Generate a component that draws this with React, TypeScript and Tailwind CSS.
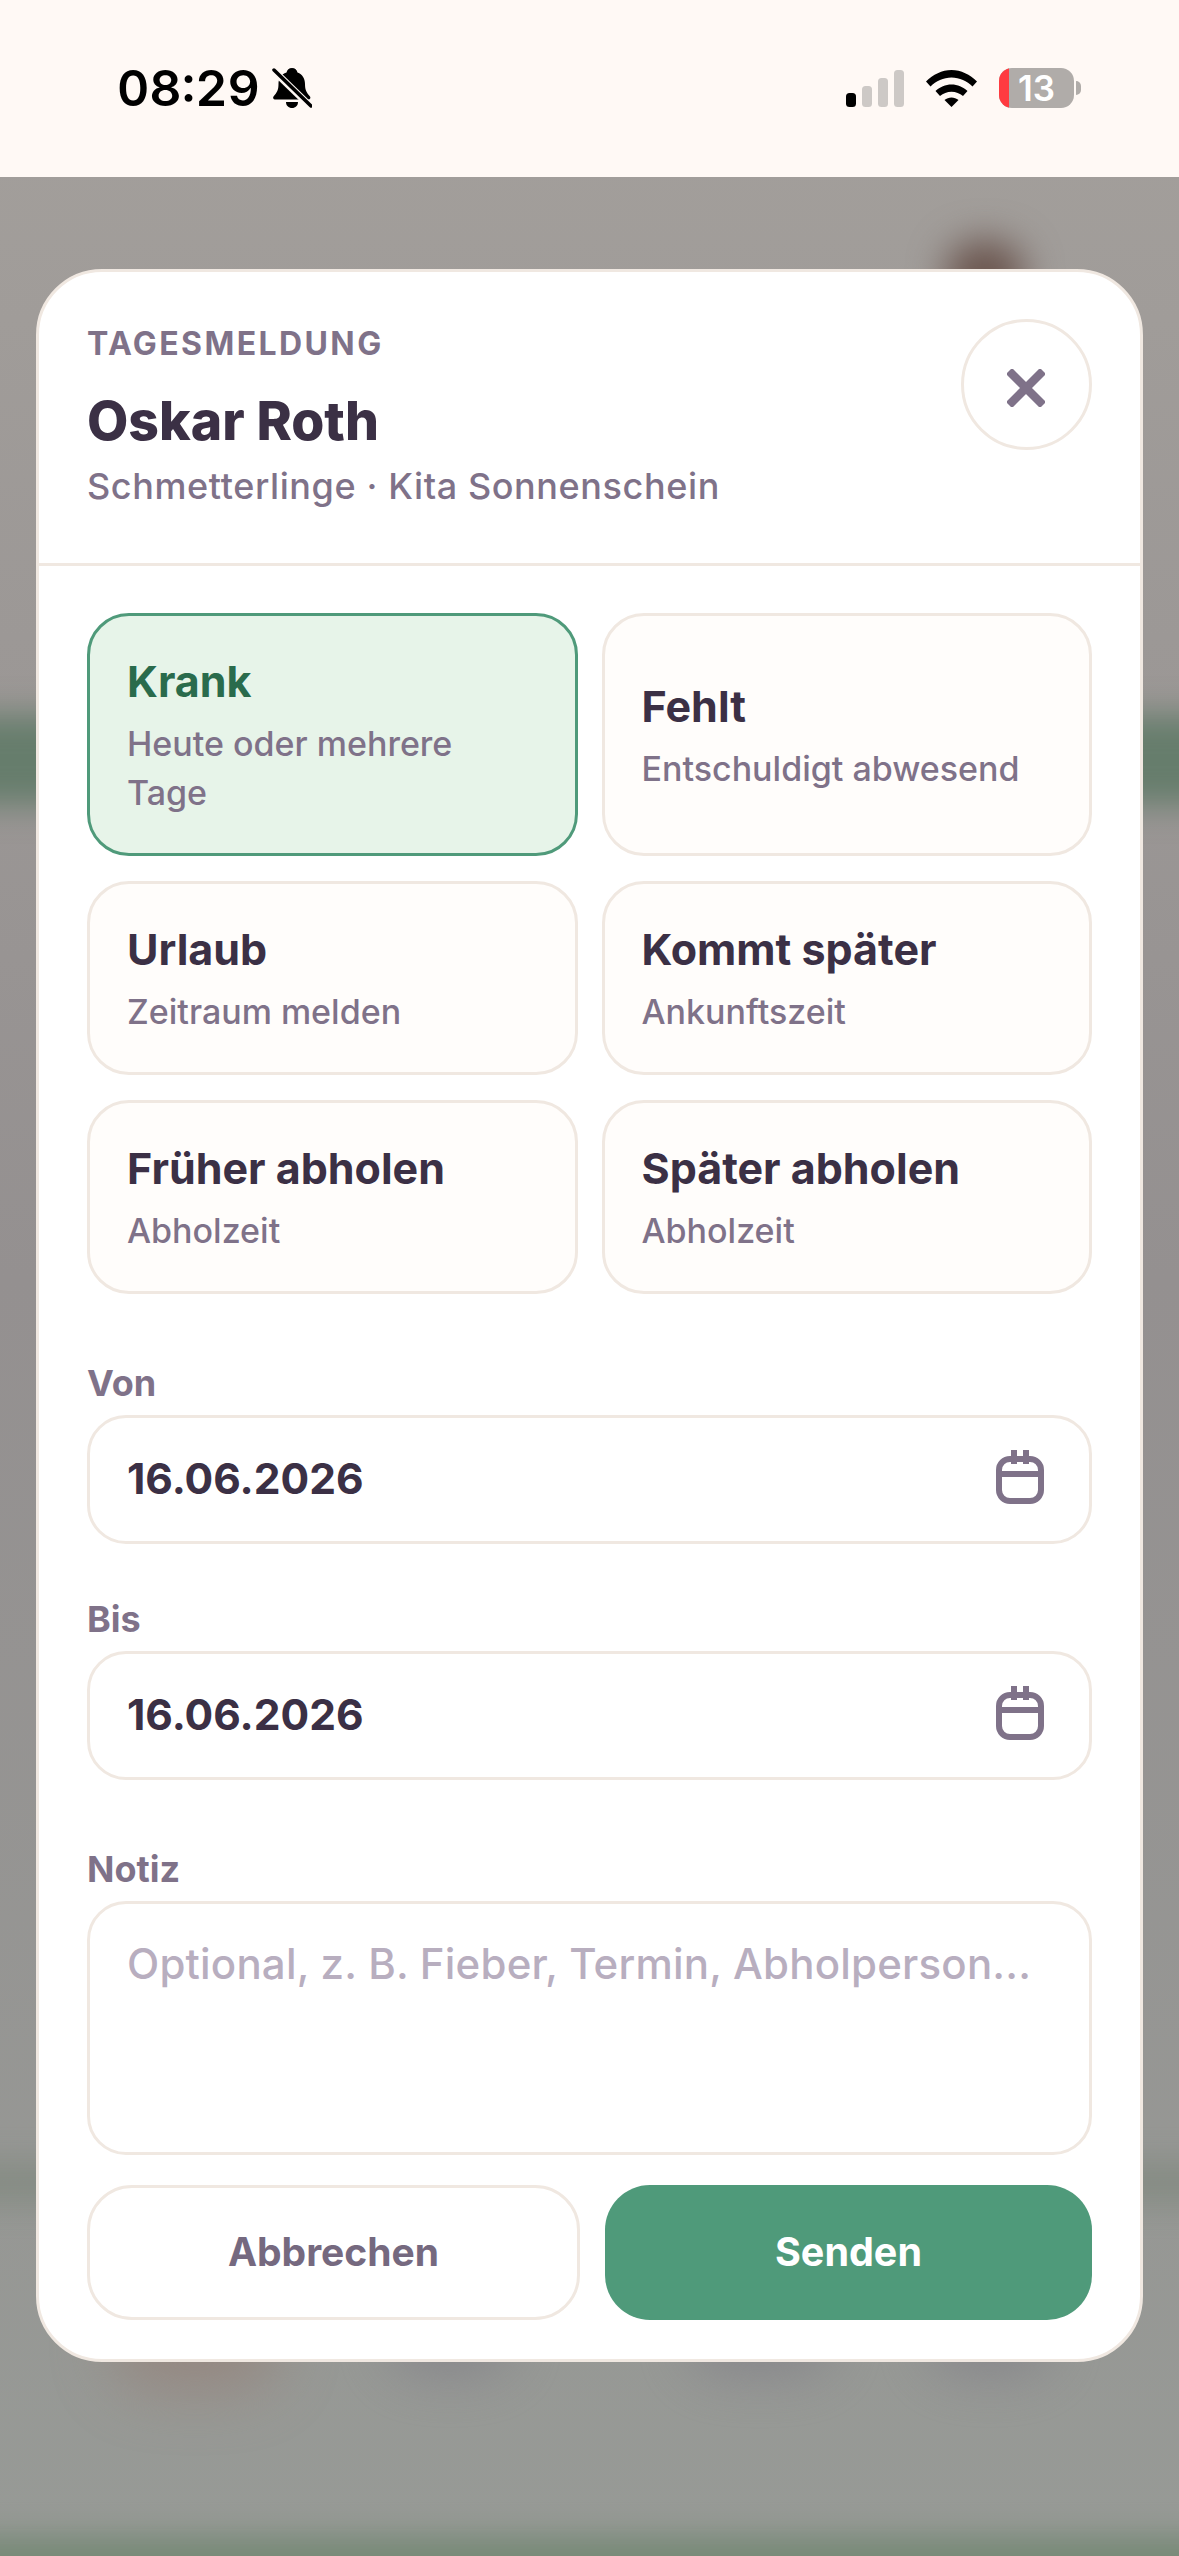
const cards = [
  { title: "Krank", sub: "Heute oder mehrere Tage", active: true },
  { title: "Fehlt", sub: "Entschuldigt abwesend" },
  { title: "Urlaub", sub: "Zeitraum melden" },
  { title: "Kommt später", sub: "Ankunftszeit" },
  { title: "Früher abholen", sub: "Abholzeit" },
  { title: "Später abholen", sub: "Abholzeit" },
];

const StatusBar = () => (
  <div className="h-[177px] bg-[#fff9f5] flex items-start justify-between pl-[117px] pr-[98px] pt-[64px]">
    <div className="flex items-center gap-[12px] h-[48px]">
      <span className="text-[50px] leading-[48px] font-semibold text-black tabular-nums">08:29</span>
      <svg width="40" height="42" viewBox="0 0 40 42">
        <path d="M20 1c3 0 5 2 5.500 4.500 5 2 7.500 6 7.500 11.500 0 6 1.500 8.500 5 12.500 1 1.500 0 3-1.500 3H3c-1.500 0-2.500-1.500-1.500-3 3.500-4 5-6.500 5-12.500 0-5.500 2.500-9.500 8-11.500C15 3 17 1 20 1z" fill="#000" />
        <path d="M14 35h12c0 3.500-2.500 6-6 6s-6-2.500-6-6z" fill="#000" />
        <path d="M1 3l37 36" stroke="#fff9f5" strokeWidth="7" />
        <path d="M2 3l37 36" stroke="#000" strokeWidth="3.500" strokeLinecap="round" />
      </svg>
    </div>
    <div className="flex items-center gap-[22px] h-[48px]">
      <svg width="58" height="37" viewBox="0 0 58 37">
        <rect x="0" y="23" width="10" height="14" rx="3.500" fill="#000" />
        <rect x="16" y="16" width="10" height="21" rx="3.500" fill="#cdc9c6" />
        <rect x="32" y="8" width="10" height="29" rx="3.500" fill="#cdc9c6" />
        <rect x="48" y="0" width="10" height="37" rx="3.500" fill="#cdc9c6" />
      </svg>
      <svg width="51" height="37" viewBox="0 0 51 37">
        <path d="M0 11.500C7 4.500 16 0 25.500 0S44 4.500 51 11.500l-4.500 5C41 11 33.500 7.500 25.500 7.500S10 11 4.500 16.500z" fill="#000" />
        <path d="M9.500 21C14 17 19.500 14.500 25.500 14.500S37 17 41.500 21l-4.500 5c-3.200-2.700-7.200-4.300-11.500-4.300S17.200 23.300 14 26z" fill="#000" />
        <path d="M18.500 30c2-1.500 4.500-2.400 7-2.400s5 .9 7 2.400l-7 7z" fill="#000" />
      </svg>
      <div className="flex items-center gap-[2px]">
        <div className="relative w-[75px] h-[40px] rounded-[13px] bg-[#b0aca9] overflow-hidden flex items-center justify-center">
          <div className="absolute left-0 top-0 bottom-0 w-[10px] bg-[#ff3b40]" />
          <span className="text-[35px] leading-[40px] font-semibold text-white">13</span>
        </div>
        <div className="w-[5px] h-[14px] rounded-r-full bg-[#b0aca9]" />
      </div>
    </div>
  </div>
);

const Backdrop = () => (
  <div className="absolute inset-0 overflow-hidden bg-gradient-to-b from-[#a4a09c] via-[#949090] to-[#979a96]">
    <div className="absolute left-[-100px] right-[-100px] top-[715px] h-[90px] bg-[#667d6c] blur-[16px]" />
    <div className="absolute left-[-100px] right-[-100px] top-[2165px] h-[36px] bg-[#7a8478] opacity-70 blur-[18px]" />
    <div className="absolute left-[-100px] right-[-100px] top-[2535px] h-[60px] bg-[#788a78] blur-[14px]" />
    <div className="absolute left-[945px] top-[240px] w-[80px] h-[70px] rounded-full bg-[#6b564f] blur-[18px]" />
    <div className="absolute left-[110px] top-[2300px] w-[170px] h-[90px] rounded-full bg-[#94776d] opacity-50 blur-[30px]" />
    <div className="absolute left-[390px] top-[2310px] w-[120px] h-[60px] rounded-full bg-[#7d7b84] opacity-70 blur-[28px]" />
    <div className="absolute left-[690px] top-[2310px] w-[140px] h-[60px] rounded-full bg-[#7d7b84] opacity-70 blur-[28px]" />
    <div className="absolute left-[930px] top-[2310px] w-[120px] h-[60px] rounded-full bg-[#7d7b84] opacity-70 blur-[28px]" />
  </div>
);

const Calendar = () => (
  <svg className="mb-[6px]" width="48" height="54" viewBox="0 0 48 54" fill="none" stroke="#7f7289" strokeWidth="6">
    <rect x="3" y="9" width="42" height="42" rx="11" />
    <path d="M3 24h42M18 0v14M30 0v14" />
  </svg>
);

const DateField = ({ label, value }: { label: string; value: string }) => (
  <div>
    <div className="text-[36px] leading-[44px] font-bold text-[#7f7289] mb-[10px]">{label}</div>
    <div className="h-[129px] rounded-[39px] border-[3px] border-[#f0e8e1] bg-white flex items-center justify-between pl-[37px] pr-[45px]">
      <span className="text-[42.500px] font-bold text-[#3b3045] mb-[2px]">{value}</span>
      <Calendar />
    </div>
  </div>
);

export default function App() {
  return (
    <div className="relative w-[1179px] h-[2556px] overflow-hidden font-['Inter',sans-serif]">
      <div className="relative z-10">
        <StatusBar />
      </div>
      <Backdrop />
      <div className="relative z-10 mx-[36px] mt-[92px] h-[2093px] rounded-[66px] border-[3px] border-[#f0e8e1] bg-white flex flex-col">
        <div className="h-[294px] border-b-[3px] border-[#f0e8e1] flex justify-between pl-[48px] pr-[48px] pt-[47px]">
          <div className="flex flex-col">
            <div className="text-[32px] leading-[36px] font-bold tracking-[2.400px] text-[#7f7289] mt-[7px]">TAGESMELDUNG</div>
            <div className="text-[53.500px] leading-[60px] font-extrabold text-[#3b3045] mt-[29px]">Oskar Roth</div>
            <div className="text-[36px] leading-[44px] font-medium tracking-[0.600px] text-[#7f7289] mt-[13px]">Schmetterlinge · Kita Sonnenschein</div>
          </div>
          <div className="w-[131px] h-[131px] rounded-full border-[3px] border-[#f0e8e1] flex items-center justify-center">
            <svg className="mt-[6px] mr-[2px]" width="38" height="38" viewBox="0 0 38 38" stroke="#7f7289" strokeWidth="8.500">
              <path d="M2 2l34 34M36 2L2 36" />
            </svg>
          </div>
        </div>
        <div className="flex-1 px-[48px] pt-[47px] flex flex-col">
          <div className="grid grid-cols-2 gap-x-[24px] gap-y-[25px]">
            {cards.map((c) => (
              <div
                key={c.title}
                className={
                  c.active
                    ? "min-h-[194px] rounded-[42px] border-[3px] border-[#4f9a7a] bg-[#e7f4e9] px-[37px] py-[36px] flex flex-col justify-center"
                    : "min-h-[194px] rounded-[42px] border-[3px] border-[#f0e8e1] bg-[#fffdfb] px-[37px] py-[36px] flex flex-col justify-center"
                }
              >
                <div className={c.active ? "text-[43px] leading-[54px] font-bold text-[#2a6b4c] mt-[2px]" : "text-[43px] leading-[54px] font-bold text-[#3b3045] mt-[2px]"}>
                  {c.title}
                </div>
                <div className="text-[34px] leading-[49px] font-medium text-[#7f7289] mt-[11px]">{c.sub}</div>
              </div>
            ))}
          </div>
          <div className="mt-[67px] flex flex-col gap-[53px]">
            <DateField label="Von" value="16.06.2026" />
            <DateField label="Bis" value="16.06.2026" />
          </div>
          <div className="mt-[67px]">
            <div className="text-[36px] leading-[44px] font-bold text-[#7f7289] mb-[10px]">Notiz</div>
            <div className="h-[254px] rounded-[39px] border-[3px] border-[#f0e8e1] bg-white px-[37px] pt-[35px] text-[42px] leading-[50px] font-medium tracking-[0.200px] text-[#b8aebf]">
              Optional, z. B. Fieber, Termin, Abholperson...
            </div>
          </div>
          <div className="mt-[30px] grid grid-cols-[493px_487px] gap-x-[25px]">
            <div className="h-[135px] rounded-[45px] border-[3px] border-[#f0e8e1] bg-white flex items-center justify-center text-[39px] font-bold text-[#75697f]">
              Abbrechen
            </div>
            <div className="h-[135px] rounded-[45px] bg-[#4f9a7a] flex items-center justify-center text-[39.500px] font-bold text-white">
              Senden
            </div>
          </div>
        </div>
      </div>
    </div>
  );
}
